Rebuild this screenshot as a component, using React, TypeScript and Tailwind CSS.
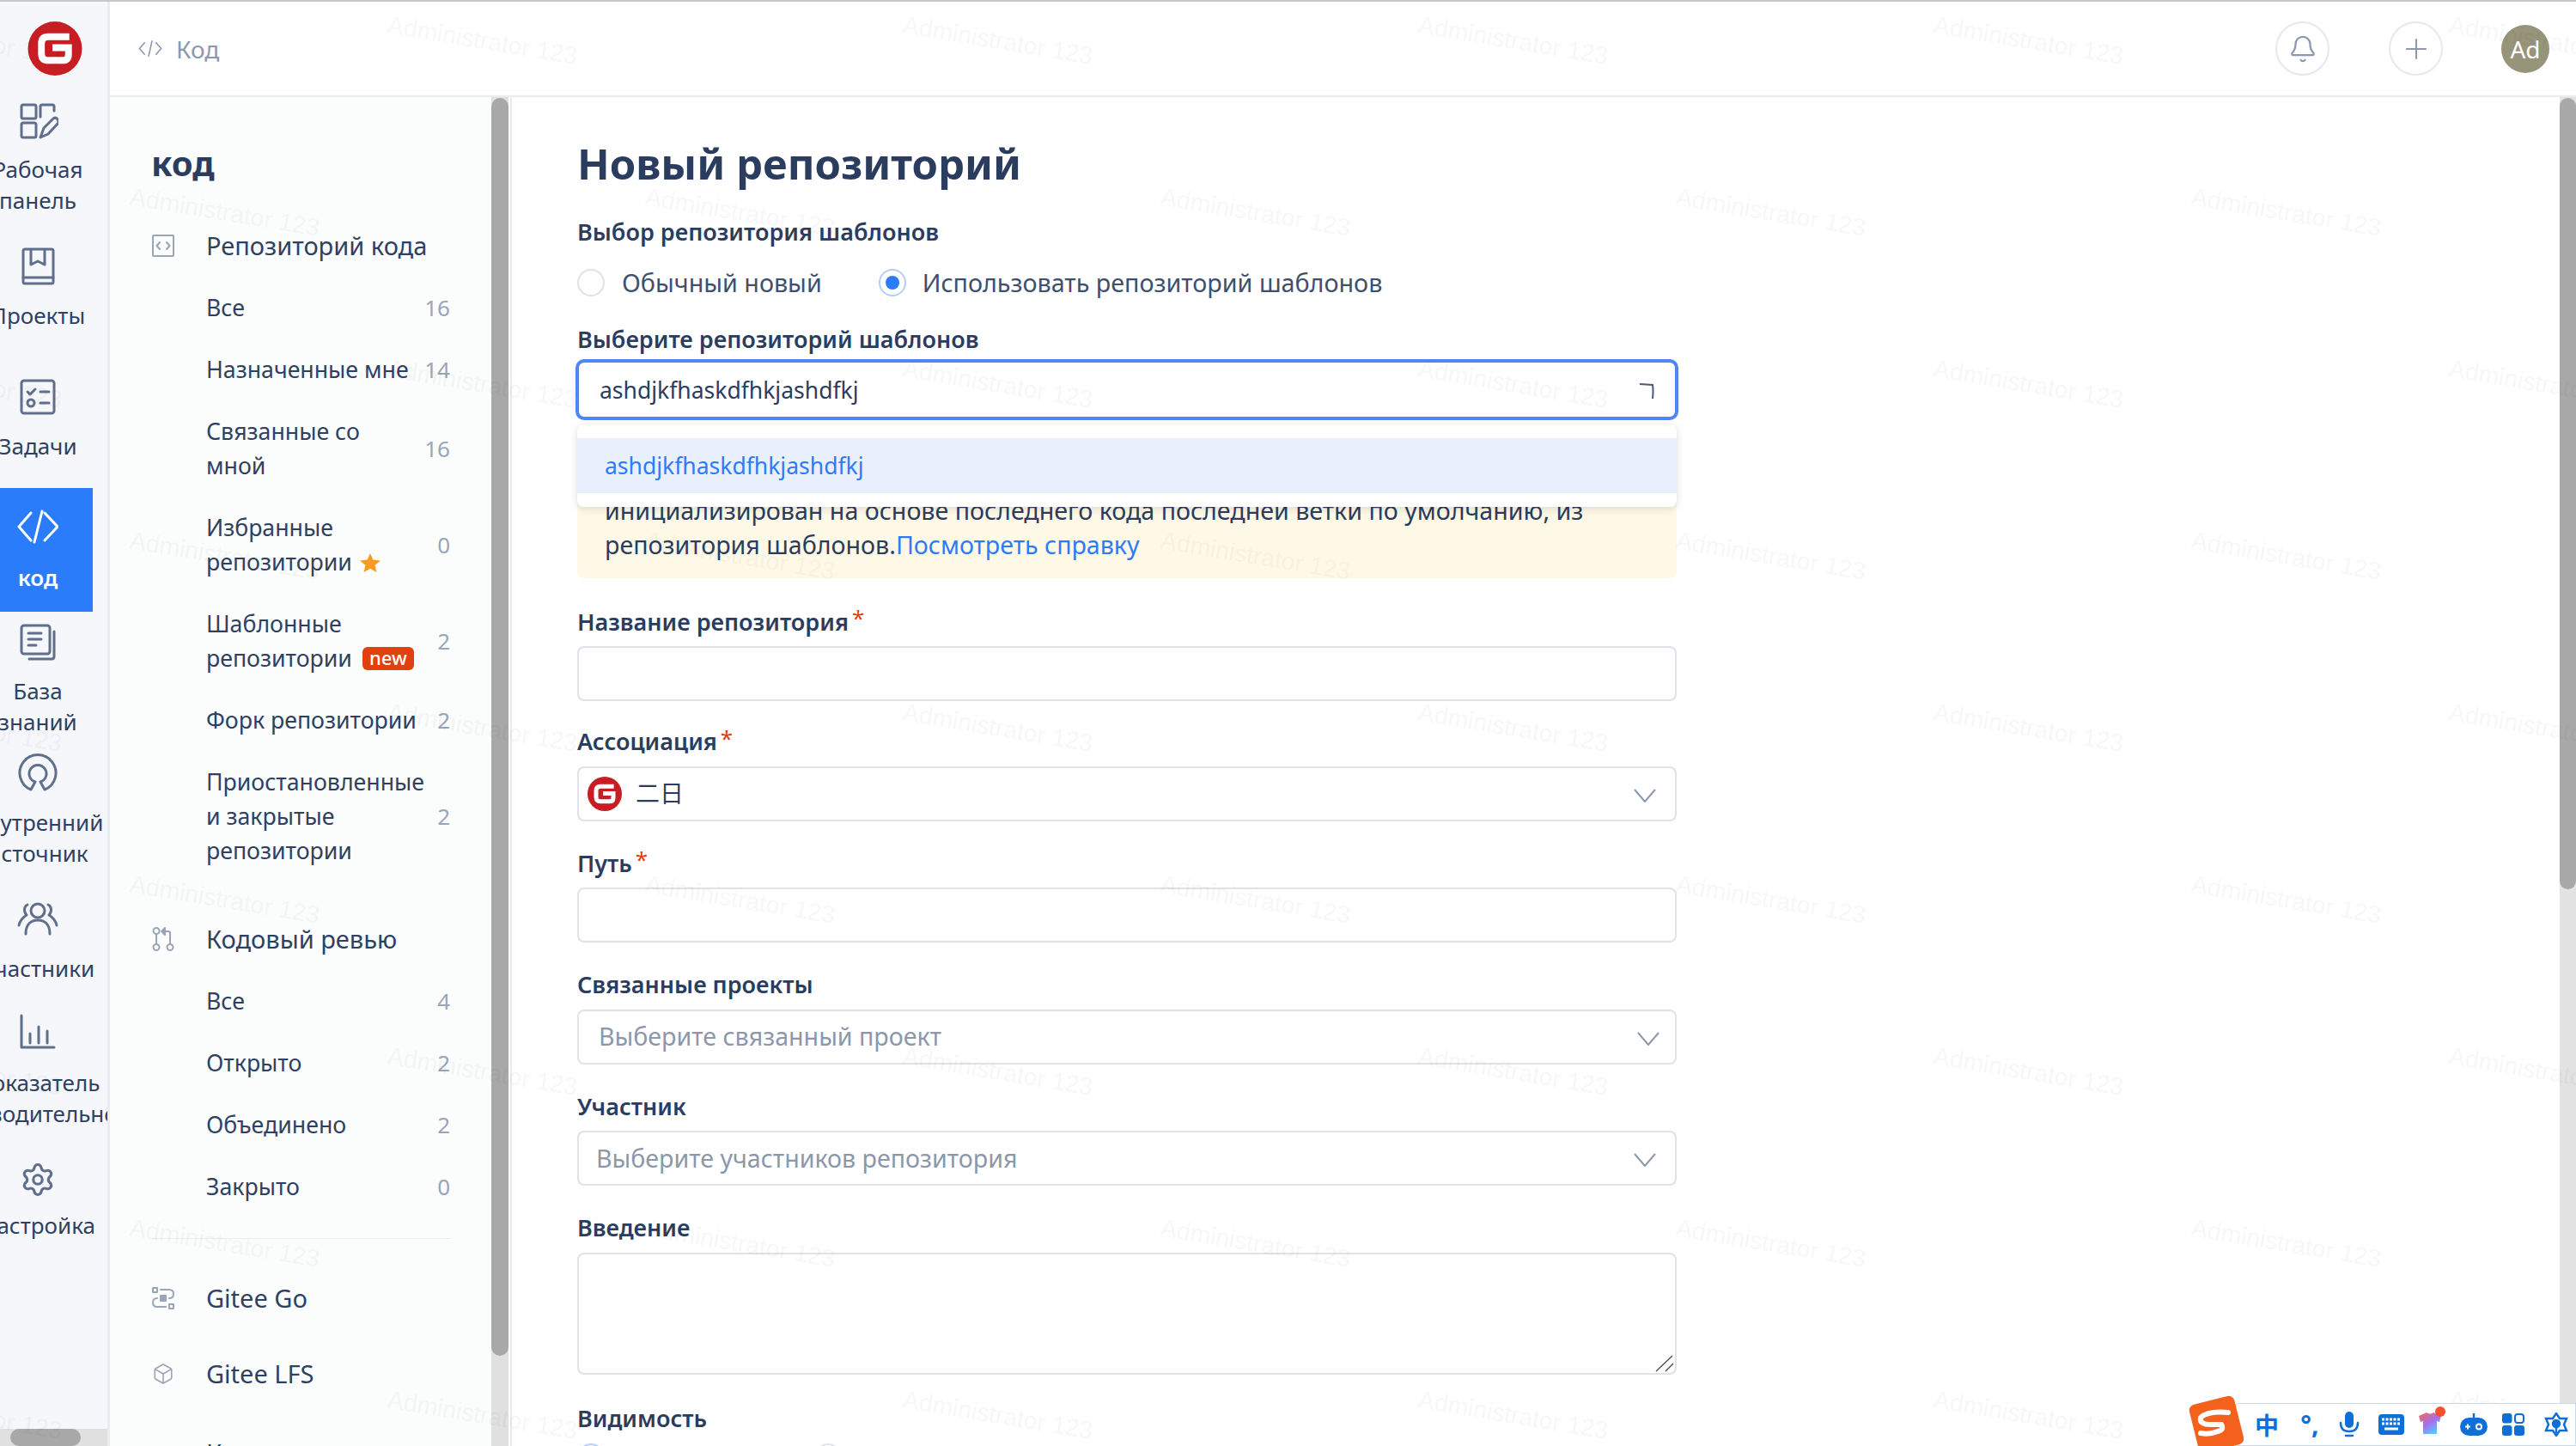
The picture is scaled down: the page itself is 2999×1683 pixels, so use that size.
import React from "react";
import { Bell, Box, Plus, Settings } from "lucide-react";

const GiteeLogo = ({ className }: { className: string }) => (
  <svg viewBox="0 0 64 64" className={className}>
    <circle cx="32" cy="32" r="32" fill="#c71d23" />
    <path
      d="M49 18H24Q16 18 16 26V38Q16 46 24 46H41Q48 46 48 39V31H29"
      fill="none"
      stroke="#fff"
      strokeWidth="8"
    />
  </svg>
);

const railStroke = {
  fill: "none",
  stroke: "#5f6f8c",
  strokeWidth: 3,
  strokeLinecap: "round" as const,
  strokeLinejoin: "round" as const,
};

const railIcons: Record<string, React.ReactNode> = {
  work: (
    <g {...railStroke}>
      <rect x="5" y="6" width="17" height="16" rx="2" />
      <rect x="5" y="27" width="17" height="17" rx="2" />
      <path d="M27 20V8Q27 6 29 6H41Q43 6 43 8V13" />
      <path d="M27 44L31 33L42 22Q45 20 47 23Q49 26 47 28L36 40Z" />
    </g>
  ),
  book: (
    <g {...railStroke}>
      <rect x="7" y="4" width="35" height="40" rx="2" />
      <path d="M7 37H42M16 5V22L24 18L32 22V5" />
    </g>
  ),
  task: (
    <g {...railStroke}>
      <rect x="5" y="5" width="38" height="38" rx="3" />
      <path d="M12 18L15 21L21 15M27 18H37M27 31H37" />
      <circle cx="16" cy="31" r="4" />
    </g>
  ),
  code: (
    <g {...railStroke} stroke="#fff">
      <path d="M16 8L2 24L16 40M29 6L20 42M32 8L47 24L32 40" />
    </g>
  ),
  wiki: (
    <g {...railStroke}>
      <rect x="5" y="5" width="33" height="33" rx="3" />
      <path d="M43 12V41Q43 44 40 44H14M13 14H28M13 21H28M13 28H22" />
    </g>
  ),
  open: (
    <g {...railStroke}>
      <path d="M16 43A21 21 0 1 1 32 43L27 34A10 10 0 1 0 21 34Z" />
    </g>
  ),
  team: (
    <g {...railStroke}>
      <circle cx="24" cy="14" r="8" />
      <path d="M10 41C10 30 16 25 24 25C32 25 38 30 38 41" />
      <path d="M12 7C8 9 7 15 11 19C6 22 3 26 2 31M36 7C40 9 41 15 37 19C42 22 45 26 46 31" />
    </g>
  ),
  stat: (
    <g {...railStroke}>
      <path d="M5 3V40H43M15 24V35M25 16V35M35 21V35" />
    </g>
  ),
};

const railItems = [
  { icon: "work", lines: ["Рабочая", "панель"], box: "h-[170px] pt-[22px]" },
  { icon: "book", lines: ["Проекты"], box: "h-[152px] pt-[22px]" },
  { icon: "task", lines: ["Задачи"], box: "h-[152px] pt-[22px]" },
  { icon: "code", lines: ["код"], box: "h-[144px] pt-[21px]", active: true },
  { icon: "wiki", lines: ["База", "знаний"], box: "h-[142px] pt-[11px]" },
  { icon: "open", lines: ["Внутренний", "источник"], box: "h-[170px] pt-[22px]" },
  { icon: "team", lines: ["Участники"], box: "h-[133px] pt-[22px]" },
  { icon: "stat", lines: ["Показатель", "производительность"], box: "h-[170px] pt-[22px]" },
  { icon: "gear", lines: ["Настройка"], box: "h-[130px] pt-[22px]" },
];

const labelGap = (icon: string) => {
  if (icon === "code") return "mt-[17px]";
  if (icon === "gear") return "mt-[11px]";
  return "mt-[15px]";
};

const Rail = () => (
  <aside className="flex w-[128px] shrink-0 flex-col border-r-[3px] border-[#e9edf2] bg-[#f5f7fa]">
    <div className="h-[92px] pl-[32px] pt-[23px]">
      <GiteeLogo className="h-[63px] w-[64px]" />
    </div>
    <nav className="min-h-0 flex-1 overflow-hidden">
      {railItems.map((item) => (
        <div
          key={item.icon}
          className={`${item.box} ${item.active ? "w-[108px] bg-[#2b7cfb] text-white font-semibold" : "text-[#2f4163]"}`}
        >
          <div className="flex w-[88px] flex-col items-center">
            {item.icon === "gear" ? (
              <span className="flex h-[48px] w-[48px] items-center justify-center">
                <Settings className="h-[42px] w-[42px] text-[#5f6f8c]" strokeWidth={1.8} />
              </span>
            ) : (
              <svg viewBox="0 0 48 48" className="h-[48px] w-[48px] shrink-0">
                {railIcons[item.icon]}
              </svg>
            )}
            <div className={labelGap(item.icon)}>
              {item.lines.map((line) => (
                <div key={line} className="flex w-[88px] justify-center whitespace-nowrap text-[26px] leading-[36px]">
                  {line}
                </div>
              ))}
            </div>
          </div>
        </div>
      ))}
    </nav>
    <div className="h-[20px] bg-[#e0e0e0] pl-[12px]">
      <div className="h-[20px] w-[82px] rounded-full bg-[#a8a8a8]" />
    </div>
  </aside>
);

const sideStroke = {
  fill: "none",
  stroke: "#9aa5b8",
  strokeWidth: 2,
  strokeLinecap: "round" as const,
  strokeLinejoin: "round" as const,
};

const CodeBoxIcon = () => (
  <svg viewBox="0 0 26 26" className="h-[26px] w-[26px]" {...sideStroke}>
    <rect x="1" y="1" width="24" height="24" rx="1" />
    <path d="M9 9L5.5 13L9 17M17 9L20.5 13L17 17" />
  </svg>
);

const ReviewIcon = () => (
  <svg viewBox="0 0 26 28" className="h-[28px] w-[26px]" {...sideStroke}>
    <circle cx="5" cy="4.5" r="3.5" />
    <circle cx="5" cy="23.5" r="3.5" />
    <circle cx="21" cy="23.5" r="3.5" />
    <path d="M5 8V20M21 20V7Q21 5 19 5H13" />
    <path d="M15 1L11 5L15 9Z" fill="#9aa5b8" />
  </svg>
);

const FlowIcon = () => (
  <svg viewBox="0 0 26 26" className="h-[26px] w-[26px]" {...sideStroke}>
    <rect x="1" y="1" width="5" height="5" />
    <rect x="20" y="20" width="5" height="5" />
    <path d="M10 3H20Q25 3 25 8Q25 13 20 13M16 23H6Q1 23 1 18Q1 13 6 13" />
    <rect x="10" y="10" width="6" height="6" fill="#9aa5b8" />
  </svg>
);

const StarIcon = () => (
  <svg viewBox="0 0 24 22" className="ml-[9px] inline-block h-[22px] w-[24px] align-[-2px]">
    <path d="M12 0L15.4 7.4L24 8.4L17.6 13.8L19.4 22L12 17.8L4.6 22L6.4 13.8L0 8.4L8.6 7.4Z" fill="#fa9a1e" />
  </svg>
);

const NewBadge = () => (
  <span className="ml-[12px] inline-block h-[27px] w-[60px] rounded-[6px] bg-[#e2400f] text-center align-[2px] text-[22px] font-medium leading-[25px] text-white">
    new
  </span>
);

const SubRow = ({ lines, count, extra }: { lines: string[]; count: number; extra?: React.ReactNode }) => (
  <div className="flex items-center py-[16px] pl-[63px]">
    <div className="flex-1 text-[26.7px] leading-[40px] text-[#2f4163]">
      {lines.map((line, i) => (
        <div key={line} className="whitespace-nowrap">
          {line}
          {i === lines.length - 1 && extra}
        </div>
      ))}
    </div>
    <span className="text-[26px] leading-[40px] text-[#9aa5b8]">{count}</span>
  </div>
);

const TopRow = ({ icon, label, className = "" }: { icon: React.ReactNode; label: string; className?: string }) => (
  <div className={`flex items-center py-[16px] ${className}`}>
    <span className="mr-[37px] flex h-[40px] w-[26px] items-center justify-center">{icon}</span>
    <span className="text-[29px] leading-[40px] text-[#2f4163]">{label}</span>
  </div>
);

const Sidebar = () => (
  <div className="w-[444px] shrink-0 overflow-hidden bg-[#fbfcfc] pl-[49px] pr-[48px]">
    <h2 className="-ml-[1px] mt-[53px] mb-[36px] text-[40px] font-bold leading-[48px] text-[#2b3d5f]">код</h2>
    <TopRow icon={<CodeBoxIcon />} label="Репозиторий кода" />
    <SubRow lines={["Все"]} count={16} />
    <SubRow lines={["Назначенные мне"]} count={14} />
    <SubRow lines={["Связанные со", "мной"]} count={16} />
    <SubRow lines={["Избранные", "репозитории"]} count={0} extra={<StarIcon />} />
    <SubRow lines={["Шаблонные", "репозитории"]} count={2} extra={<NewBadge />} />
    <SubRow lines={["Форк репозитории"]} count={2} />
    <SubRow lines={["Приостановленные", "и закрытые", "репозитории"]} count={2} />
    <TopRow icon={<ReviewIcon />} label="Кодовый ревью" className="mt-[31px]" />
    <SubRow lines={["Все"]} count={4} />
    <SubRow lines={["Открыто"]} count={2} />
    <SubRow lines={["Объединено"]} count={2} />
    <SubRow lines={["Закрыто"]} count={0} />
    <div className="mt-[24px] mb-[33px] h-[1px] bg-[#e9edf2]" />
    <TopRow icon={<FlowIcon />} label="Gitee Go" />
    <TopRow icon={<Box className="h-[30px] w-[30px] text-[#9aa5b8]" strokeWidth={1.5} />} label="Gitee LFS" className="mt-[16px]" />
    <TopRow icon={null} label="Клиент" className="mt-[20px]" />
  </div>
);

const Chevron = ({ className = "" }: { className?: string }) => (
  <svg viewBox="0 0 26 16" className={`absolute top-[24px] h-[16px] w-[26px] ${className}`} fill="none" stroke="#8c97aa" strokeWidth="2">
    <path d="M1 1L13 15L25 1" />
  </svg>
);

const Label = ({ text, required }: { text: string; required?: boolean }) => (
  <div className="mb-[8px] flex h-[40px] items-center text-[27px] font-semibold text-[#2b3d5f]">
    {text}
    {required && <span className="mb-[10px] ml-[4px] text-[26px] font-normal leading-none text-[#e2400f]">*</span>}
  </div>
);

const inputClass = "block h-[64px] w-full rounded-[8px] border-2 border-[#dfe2e8] bg-white outline-none";

const Radio = ({ checked }: { checked?: boolean }) => (
  <span
    className={`flex h-[32px] w-[32px] shrink-0 items-center justify-center rounded-full border-2 bg-white ${checked ? "border-[#b5cdf8]" : "border-[#dfe2e8]"}`}
  >
    {checked && <span className="h-[16px] w-[16px] rounded-full bg-[#2b7cfb]" />}
  </span>
);

const SelectBox = ({ placeholder, pad, chevron }: { placeholder: string; pad: string; chevron: string }) => (
  <div className={`${inputClass} relative flex items-center ${pad} text-[28.6px] text-[#8c97aa]`}>
    {placeholder}
    <Chevron className={chevron} />
  </div>
);

const Form = () => (
  <div className="min-w-0 flex-1 overflow-hidden pl-[76px]">
    <div className="w-[1280px]">
      <h1 className="mt-[41px] mb-[24px] text-[49px] font-bold leading-[72px] text-[#2b3d5f]">Новый репозиторий</h1>
      <div className="flex h-[40px] items-center text-[27px] font-semibold text-[#2b3d5f]">Выбор репозитория шаблонов</div>
      <div className="mt-[19px] mb-[26px] flex h-[40px] items-center text-[28.7px] text-[#3f4f6e]">
        <Radio />
        <span className="ml-[20px] mr-[66px]">Обычный новый</span>
        <Radio checked />
        <span className="ml-[19px]">Использовать репозиторий шаблонов</span>
      </div>
      <div className="flex h-[40px] items-center text-[27px] font-semibold text-[#2b3d5f]">Выберите репозиторий шаблонов</div>

      <div className="relative mt-[3px]">
        <div className="-mx-[2px] flex h-[71px] items-center justify-between rounded-[10px] border-[4px] border-[#4f86f7] bg-white pl-[24px] pr-[24px] pt-[2px] text-[26.5px] text-[#2b3d5f]">
          ashdjkfhaskdfhkjashdfkj
          <svg viewBox="0 0 18 20" className="h-[20px] w-[18px]" fill="none" stroke="#4a5a78" strokeWidth="2">
            <path d="M1 2L16 3Q17 10 16 19" />
          </svg>
        </div>
        <div className="absolute left-0 right-0 top-[76px] z-10 rounded-[8px] bg-white py-[16px] shadow-[0_2px_10px_rgba(0,0,0,0.14)]">
          <div className="flex h-[64px] items-center bg-[#e9f0fd] pl-[32px] pt-[2px] text-[26.5px] text-[#2e7bf6]">ashdjkfhaskdfhkjashdfkj</div>
        </div>
      </div>

      <div className="mt-[16px] mb-[31px] rounded-[8px] bg-[#fef9e7] pl-[32px] pr-[32px] pt-[29px] pb-[19px] text-[28.6px] leading-[40px] text-[#2b3d5f]">
        <div>Новый репозиторий будет</div>
        <div className="whitespace-nowrap">инициализирован на основе последнего кода последней ветки по умолчанию, из</div>
        <div>
          репозитория шаблонов.<span className="text-[#2e7bf6]">Посмотреть справку</span>
        </div>
      </div>

      <Label text="Название репозитория" required />
      <input className={`${inputClass} mb-[27.5px]`} />

      <Label text="Ассоциация" required />
      <div className={`${inputClass} relative mb-[29.5px] flex items-center pl-[10px]`}>
        <GiteeLogo className="h-[40px] w-[40px]" />
        <span className="mb-[4px] ml-[16px] font-['Noto_Sans_CJK_SC',sans-serif] text-[28px] text-[#2b3d5f]">二日</span>
        <Chevron className="right-[22px]" />
      </div>

      <Label text="Путь" required />
      <input className={`${inputClass} mb-[29.5px]`} />

      <Label text="Связанные проекты" />
      <div className="mb-[29.5px]">
        <SelectBox placeholder="Выберите связанный проект" pad="pl-[23px]" chevron="right-[18px]" />
      </div>

      <Label text="Участник" />
      <div className="mb-[29.5px]">
        <SelectBox placeholder="Выберите участников репозитория" pad="pl-[20px]" chevron="right-[22px]" />
      </div>

      <Label text="Введение" />
      <div className="relative mb-[32px]">
        <textarea className="block h-[142px] w-full resize-none rounded-[8px] border-2 border-[#dfe2e8] bg-white outline-none" />
        <svg viewBox="0 0 22 20" className="absolute bottom-[3px] right-[3px] h-[20px] w-[22px]" fill="none" stroke="#555" strokeWidth="1.5">
          <path d="M1 19L20 1M12 19L21 10" />
        </svg>
      </div>

      <Label text="Видимость" />
      <div className="mt-[4px] flex gap-[244px]">
        <Radio checked />
        <Radio />
      </div>
    </div>
  </div>
);

const Header = () => (
  <header className="flex h-[111px] shrink-0 items-center border-b-2 border-[#e9edf2] bg-white pl-[33px] pr-[31px]">
    <svg viewBox="0 0 26 20" className="h-[21px] w-[28px]" fill="none" stroke="#8c98ad" strokeWidth="1.5">
      <path d="M7 3L1 10L7 17M15 1L11 19M19 3L25 10L19 17" />
    </svg>
    <span className="ml-[16px] flex-1 text-[28px] text-[#8c98ad]">Код</span>
    <div className="flex h-[63px] w-[63px] items-center justify-center rounded-full border-2 border-[#e4e9ef]">
      <Bell className="h-[34px] w-[34px] text-[#8c98ad]" strokeWidth={1.6} />
    </div>
    <div className="ml-[69px] flex h-[63px] w-[63px] items-center justify-center rounded-full border-2 border-[#e4e9ef]">
      <Plus className="h-[38px] w-[38px] text-[#8c98ad]" strokeWidth={1.3} />
    </div>
    <div className="ml-[68px] flex h-[56px] w-[56px] items-center justify-center rounded-full bg-[#989479] text-[28px] text-white">
      Ad
    </div>
  </header>
);

const Scrollbar = ({ thumb }: { thumb: string }) => (
  <div className="w-[19px] shrink-0 bg-[#e2e2e2] pt-[1px]">
    <div className={`${thumb} w-full rounded-full bg-[#a8a8a8]`} />
  </div>
);

const Watermark = () => (
  <svg className="pointer-events-none absolute inset-0 z-20 h-full w-full">
    <defs>
      <pattern id="wm" width="600" height="400" patternUnits="userSpaceOnUse" patternTransform="translate(100 0)">
        <g fontFamily="Liberation Sans, sans-serif" fontSize="28.5" fill="#000" fillOpacity="0.03">
          <text x="50" y="238" transform="rotate(9.5 50 238)">Administrator 123</text>
          <text x="350" y="38" transform="rotate(9.5 350 38)">Administrator 123</text>
        </g>
      </pattern>
    </defs>
    <rect width="100%" height="100%" fill="url(#wm)" />
  </svg>
);

const ImeBar = () => (
  <div className="absolute bottom-0 right-0 z-30 flex h-[50px] w-[397px] items-center rounded-tl-[4px] border border-[#ccd9e8] bg-white pl-[22px] text-[#0f6fd6]">
    <svg viewBox="0 0 64 64" className="absolute -left-[55px] -top-[10px] h-[64px] w-[64px]">
      <rect x="5" y="5" width="54" height="58" rx="7" fill="#f4611c" transform="rotate(-14 32 32)" />
      <path d="M46 20Q22 18 14 26Q12 34 26 34H38Q42 40 34 42Q24 46 14 44" fill="none" stroke="#fff" strokeWidth="6" strokeLinecap="round" />
    </svg>
    <span className="w-[24px] text-center font-['Noto_Sans_CJK_SC',sans-serif] text-[28px] font-bold leading-none">中</span>
    <span className="ml-[28px] w-[24px] text-center text-[30px] font-bold leading-none">°,</span>
    <svg viewBox="0 0 24 30" className="ml-[22px] h-[30px] w-[24px]">
      <rect x="7" y="0" width="10" height="19" rx="5" fill="#0f6fd6" />
      <path d="M2 13Q2 23 12 23Q22 23 22 13M8 28H16" fill="none" stroke="#0f6fd6" strokeWidth="2.5" strokeLinecap="round" />
    </svg>
    <svg viewBox="0 0 30 24" className="ml-[22px] h-[24px] w-[30px]">
      <rect x="0" y="0" width="30" height="24" rx="4" fill="#0f6fd6" />
      <path d="M4 6H26M4 11H26" stroke="#fff" strokeWidth="3" strokeDasharray="3 1.5" />
      <path d="M7 17H23" stroke="#fff" strokeWidth="3" />
    </svg>
    <svg viewBox="0 0 34 34" className="ml-[15px] h-[34px] w-[34px] -translate-y-[4px]">
      <defs>
        <linearGradient id="shirt" x1="0" y1="0" x2="0.6" y2="1">
          <stop offset="0" stopColor="#f36a4d" />
          <stop offset="0.55" stopColor="#a86ef0" />
          <stop offset="1" stopColor="#5ec3ff" />
        </linearGradient>
      </defs>
      <path d="M2 11L11 7Q15 10 19 7L28 11L26 18L23 17V32H7V17L4 18Z" fill="url(#shirt)" />
      <circle cx="27" cy="6" r="6" fill="#f4512c" />
    </svg>
    <svg viewBox="0 0 32 26" className="ml-[16px] h-[26px] w-[32px]">
      <path d="M16 0V6" stroke="#0f6fd6" strokeWidth="2.5" />
      <rect x="0" y="5" width="32" height="21" rx="10.5" fill="#0f6fd6" />
      <path d="M6 15.5H12M9 12.5V18.5" stroke="#fff" strokeWidth="2" />
      <circle cx="22" cy="15.5" r="3" fill="none" stroke="#fff" strokeWidth="2" />
    </svg>
    <svg viewBox="0 0 26 26" className="ml-[17px] h-[26px] w-[26px]" fill="#0f6fd6">
      <rect x="0" y="0" width="11.5" height="11.5" rx="3" />
      <rect x="0" y="14" width="11.5" height="12" rx="3" />
      <rect x="14" y="14" width="12" height="12" rx="3" />
      <rect x="15" y="1" width="10" height="10" rx="3" fill="none" stroke="#0f6fd6" strokeWidth="2" />
    </svg>
    <svg viewBox="0 0 28 28" className="ml-[23px] h-[28px] w-[28px]" fill="none" stroke="#0f6fd6" strokeWidth="2.5">
      <path d="M14 1L18 7H26L23 14L26 21H18L14 27L10 21H2L5 14L2 7H10Z" />
      <circle cx="14" cy="13" r="4" fill="#0f6fd6" />
      <path d="M14 16V24" />
    </svg>
  </div>
);

export default function App() {
  return (
    <div className="relative h-[1683px] w-[2999px] overflow-hidden bg-white font-['Noto_Sans','Noto_Sans_CJK_SC',sans-serif]">
      <div className="h-[2px] bg-[#c8c8c8]" />
      <div className="flex h-[1681px]">
        <Rail />
        <div className="flex min-w-0 flex-1 flex-col">
          <Header />
          <div className="flex min-h-0 flex-1">
            <Sidebar />
            <div className="w-[20px] shrink-0 bg-[#e0e0e0] pt-[1px]">
              <div className="h-[1464px] w-full rounded-full bg-[#a8a8a8]" />
            </div>
            <div className="w-[2px] shrink-0 bg-white" />
            <div className="w-[2px] shrink-0 bg-[#e9edf2]" />
            <Form />
            <Scrollbar thumb="h-[921px]" />
          </div>
        </div>
      </div>
      <Watermark />
      <ImeBar />
    </div>
  );
}
